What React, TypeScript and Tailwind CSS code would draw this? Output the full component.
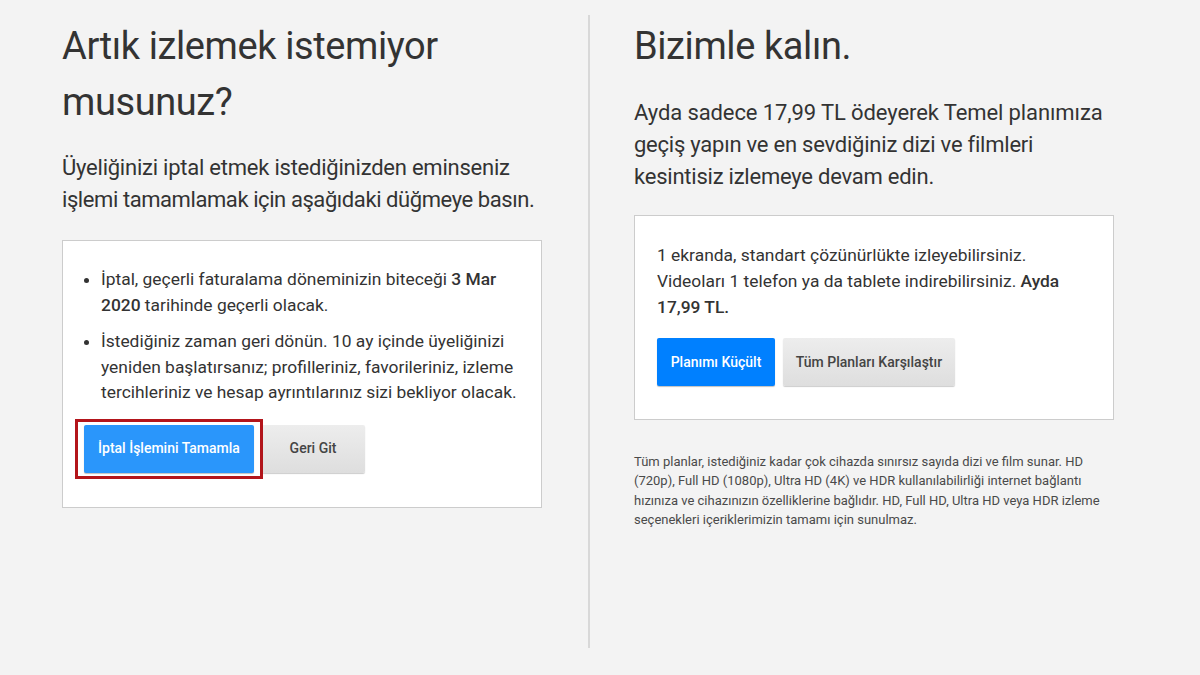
export default function App() {
  return (
    <div className="w-[1200px] h-[675px] bg-[#f3f3f3] flex overflow-hidden text-[#333] font-['Roboto','Liberation_Sans',sans-serif]">
      <div className="w-[590px] h-[633px] mt-[15px] border-r-2 border-[#d8d8d8] pl-[62px] shrink-0">
        <h1 className="text-[38px] leading-[56px] mt-[3px] w-[480px] tracking-[-0.4px]">Artık izlemek istemiyor musunuz?</h1>
        <p className="text-[22px] leading-[32px] mt-[22px] w-[490px] tracking-[-0.23px]">Üyeliğinizi iptal etmek istediğinizden eminseniz <span className="tracking-[-0.42px]">işlemi tamamlamak için aşağıdaki düğmeye basın.</span></p>
        <div className="w-[480px] h-[268px] mt-[24px] bg-white border border-[#ccc] pl-[38px] pr-[20px] pt-[26px]">
          <ul className="list-disc text-[17.4px] leading-[25.6px]">
            <li>İptal, geçerli faturalama döneminizin biteceği <b className="font-medium">3 Mar 2020</b> tarihinde geçerli olacak.</li>
            <li className="mt-[11px]">İstediğiniz zaman geri dönün. 10 ay içinde üyeliğinizi yeniden başlatırsanız; profilleriniz, favorileriniz, izleme tercihleriniz ve hesap ayrıntılarınız sizi bekliyor olacak.</li>
          </ul>
          <div className="flex items-center mt-[13px] -ml-[26px]">
            <div className="w-[188px] h-[60px] border-[3px] border-[#b3151b] pl-[6px] pt-[3px] shrink-0">
              <button className="w-[170px] h-[48px] bg-[#2a96fb] rounded-[2px] shadow-[0_1px_1px_rgba(0,0,0,0.25)] text-white text-[14px] font-medium">İptal İşlemini Tamamla</button>
            </div>
            <button className="w-[102px] h-[48px] bg-gradient-to-b from-[#ededed] to-[#dedede] rounded-r-[2px] shadow-[0_1px_1px_rgba(0,0,0,0.2)] text-[#444] text-[14px] font-medium pr-[2px]">Geri Git</button>
          </div>
        </div>
      </div>
      <div className="pl-[44px] pt-[15px]">
        <h1 className="text-[38px] leading-[56px] mt-[3px] tracking-[-0.4px]">Bizimle kalın.</h1>
        <p className="text-[22px] leading-[32px] mt-[23px] w-[480px] tracking-[-0.23px]"><span className="tracking-[-0.1px]">Ayda sadece 17,99 TL ödeyerek Temel planımıza</span> geçiş yapın ve en sevdiğiniz dizi ve filmleri kesintisiz izlemeye devam edin.</p>
        <div className="w-[480px] h-[205px] mt-[22px] bg-white border border-[#ccc] pl-[22px] pt-[26px]">
          <p className="text-[17.4px] leading-[26px] w-[420px]">1 ekranda, standart çözünürlükte izleyebilirsiniz. Videoları 1 telefon ya da tablete indirebilirsiniz. <b className="font-medium">Ayda 17,99 TL.</b></p>
          <div className="flex gap-[8px] mt-[18px]">
            <button className="w-[118px] h-[48px] bg-[#0080ff] rounded-[2px] shadow-[0_1px_1px_rgba(0,0,0,0.25)] text-white text-[14px] font-medium">Planımı Küçült</button>
            <button className="w-[172px] h-[48px] bg-gradient-to-b from-[#ededed] to-[#dedede] rounded-[2px] shadow-[0_1px_1px_rgba(0,0,0,0.2)] text-[#444] text-[14px] font-medium">Tüm Planları Karşılaştır</button>
          </div>
        </div>
        <p className="text-[13px] leading-[19.3px] mt-[32px] w-[480px] text-[#4a4a4a]">Tüm planlar, istediğiniz kadar çok cihazda sınırsız sayıda dizi ve film sunar. HD (720p), Full HD (1080p), Ultra HD (4K) ve HDR kullanılabilirliği internet bağlantı hızınıza ve cihazınızın özelliklerine bağlıdır. HD, Full HD, Ultra HD veya HDR izleme seçenekleri içeriklerimizin tamamı için sunulmaz.</p>
      </div>
    </div>
  );
}
